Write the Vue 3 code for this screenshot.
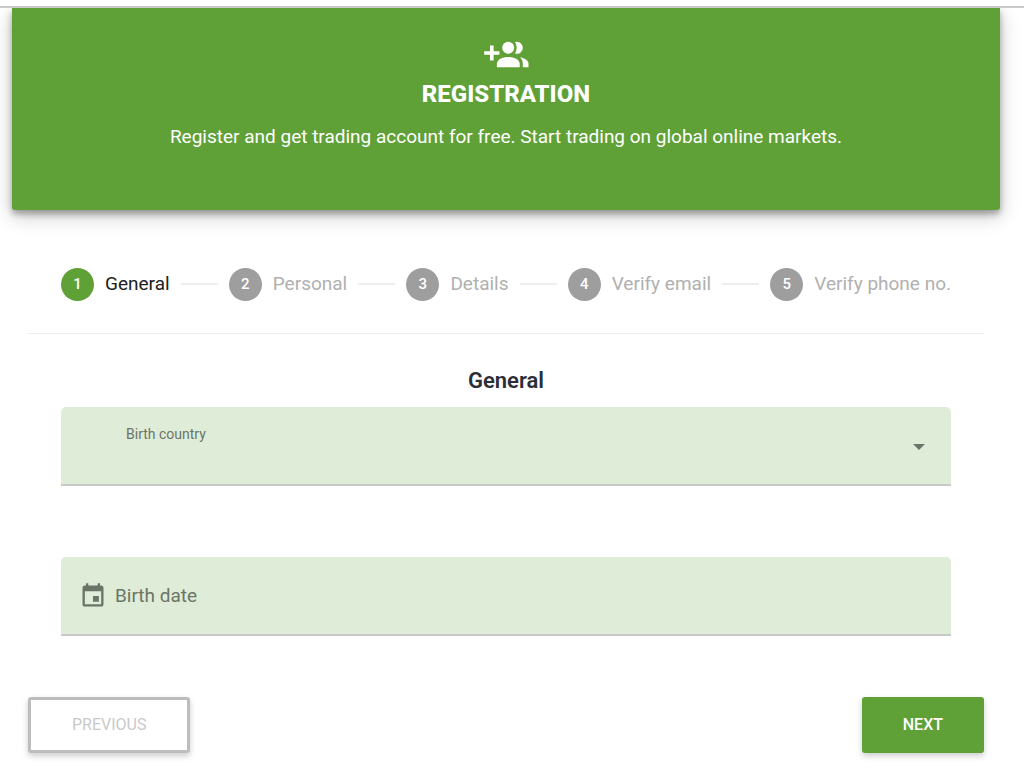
<script setup>
import { ref } from 'vue'

const steps = ['General', 'Personal', 'Details', 'Verify email', 'Verify phone no.']
const current = ref(0)
const country = ref('')
const birthDate = ref('')
</script>

<template>
  <main class="page">
    <header class="banner">
      <svg class="banner-icon" viewBox="0 0 44 28" width="44" height="28" fill="currentColor" aria-hidden="true">
        <path d="M6 4.5h3.6v5.8h5.8v3.4H9.6v5.8H6v-5.8H.2v-3.4H6z" />
        <circle cx="24.2" cy="6.8" r="6" />
        <path d="M31 1.1a6 6 0 1 1 0 11.4c2.2-3.3 2.2-8 0-11.4z" />
        <path d="M12.9 26.2v-3.4c0-4.2 5.6-6.9 11.4-6.9s11.4 2.7 11.4 6.9v3.4z" />
        <path d="M36 16.2c4.4.8 8.5 3.1 8.5 6.6v3.4h-5.7v-3.4c0-2.7-1-4.9-2.8-6.6z" />
      </svg>
      <h1>REGISTRATION</h1>
      <p>Register and get trading account for free. Start trading on global online markets.</p>
    </header>

    <ol class="stepper">
      <template v-for="(step, i) in steps" :key="step">
        <li v-if="i" class="line" aria-hidden="true"></li>
        <li class="step" :class="{ active: i === current }">
          <span class="number">{{ i + 1 }}</span>
          <span>{{ step }}</span>
        </li>
      </template>
    </ol>

    <form class="form" @submit.prevent>
      <h2>General</h2>
      <div class="field">
        <select id="country" v-model="country">
          <option value=""></option>
        </select>
        <label class="floating" for="country">Birth country</label>
        <svg class="caret" viewBox="0 0 12 6" width="12" height="6" fill="currentColor" aria-hidden="true">
          <path d="M0 0h12L6 6z" />
        </svg>
      </div>
      <div class="field date">
        <svg viewBox="0 0 24 24" width="28" height="28" fill="currentColor" aria-hidden="true">
          <path d="M17 12h-5v5h5v-5zM16 1v2H8V1H6v2H5c-1.11 0-1.99.9-1.99 2L3 19c0 1.1.89 2 2 2h14c1.1 0 2-.9 2-2V5c0-1.1-.9-2-2-2h-1V1h-2zm3 18H5V8h14v11z" />
        </svg>
        <label for="birth-date">Birth date</label>
        <input id="birth-date" v-model="birthDate" type="text" />
      </div>
    </form>

    <footer class="actions">
      <button class="previous" type="button" disabled>PREVIOUS</button>
      <button class="next" type="button">NEXT</button>
    </footer>
  </main>
</template>

<style>
body {
  background: #fff;
}
</style>

<style scoped>
.page {
  box-sizing: border-box;
  margin-top: 6px;
  padding: 0 24px 16px 12px;
  border-top: 2px solid #c9c9c9;
  overflow: hidden;
  font-family: Roboto, sans-serif;
  font-size: 19px;
  color: #212121;
}
.banner {
  box-sizing: border-box;
  padding: 33px 24px 59px;
  border-radius: 0 0 3px 3px;
  background: #5fa137;
  color: #fff;
  text-align: center;
  box-shadow: 0 4px 6px rgba(0, 0, 0, 0.3), 0 6px 20px rgba(0, 0, 0, 0.22);
}
.banner-icon {
  display: block;
  margin: 0 auto;
  overflow: visible;
}
h1 {
  margin: 10px 0 0;
  font-size: 24px;
  line-height: 30px;
  font-weight: 800;
}
.banner p {
  margin: 14px 0 0;
  line-height: 28px;
}
.stepper {
  display: flex;
  align-items: center;
  gap: 11px;
  margin: 0 16px;
  padding: 57px 33px 32px;
  border-bottom: 1px solid #ececec;
  list-style: none;
}
.step {
  display: flex;
  align-items: center;
  gap: 11px;
  line-height: 34px;
  color: #b0b0b0;
  white-space: nowrap;
}
.step.active {
  color: #212121;
}
.number {
  width: 33px;
  height: 33px;
  border-radius: 50%;
  background: #9e9e9e;
  color: #fff;
  font-size: 15px;
  font-weight: 500;
  line-height: 32px;
  text-align: center;
}
.active .number {
  background: #5fa137;
}
.line {
  flex: 1;
  height: 2px;
  background: #eee;
}
.form {
  margin: 0 49px;
}
h2 {
  margin: 0;
  padding: 31px 0 10px;
  font-size: 22px;
  line-height: 32px;
  font-weight: 600;
  color: #2b2e38;
  text-align: center;
}
.field {
  position: relative;
  box-sizing: border-box;
  height: 79px;
  margin-bottom: 71px;
  border-bottom: 2px solid #c9c9c9;
  border-radius: 5px 5px 0 0;
  background: #dfecd8;
  color: #6b7567;
}
.field select,
.field input {
  border: 0;
  outline: 0;
  background: transparent;
  font: inherit;
  color: #212121;
}
.field select {
  appearance: none;
  width: 100%;
  height: 100%;
  padding: 28px 60px 0 65px;
}
.floating {
  position: absolute;
  top: 17px;
  left: 65px;
  font-size: 14px;
  line-height: 20px;
  pointer-events: none;
}
.caret {
  position: absolute;
  top: 37px;
  right: 26px;
  pointer-events: none;
}
.date {
  display: flex;
  align-items: center;
  gap: 8px;
  margin-bottom: 61px;
  padding: 0 18px;
}
.date input {
  flex: 1;
  min-width: 0;
}
.actions {
  display: flex;
  justify-content: space-between;
  margin: 0 16px;
}
button {
  height: 56px;
  border: 0;
  border-radius: 3px;
  font: 400 16px/24px Roboto, sans-serif;
  box-shadow: 0 3px 6px rgba(0, 0, 0, 0.2);
}
.previous {
  padding: 0 41px;
  border: 3px solid #bdbdbd;
  background: #fff;
  color: #c9c9c9;
}
.next {
  padding: 0 41px;
  background: #5fa137;
  color: #fff;
  font-weight: 500;
}
</style>
